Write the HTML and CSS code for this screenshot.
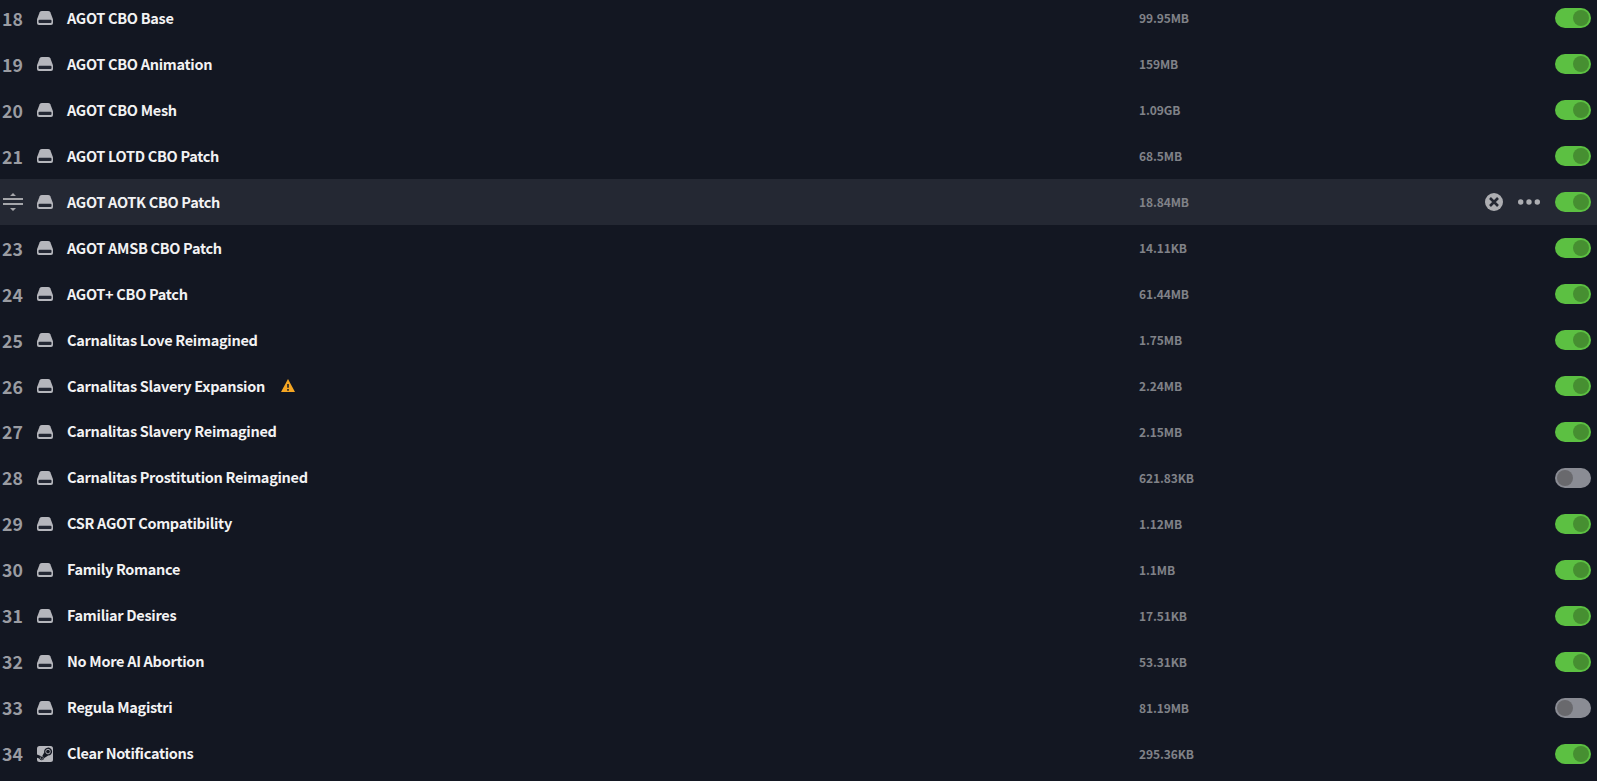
FILE: index.html
```html
<!DOCTYPE html>
<html lang="en">
<head>
  <meta charset="UTF-8" />
  <meta name="viewport" content="width=device-width, initial-scale=1.0" />
  <title>Playset</title>
  <link rel="stylesheet" href="styles.css">
</head>
<body>
  <svg width="0" height="0" class="sprite">
    <symbol id="disk" viewBox="0 0 16 14">
      <path d="M5 0h6q1.700 0 2.300 1.300L16 8.200V12q0 2-2 2H2q-2 0-2-2V8.200L2.700 1.300Q3.300 0 5 0Z" fill="#b5b6bc"/>
      <rect x="1.500" y="8.800" width="13" height="3.200" rx="1" fill="#232733"/>
    </symbol>
    <symbol id="steam" viewBox="0 0 16 16">
      <rect width="16" height="16" rx="2.500" fill="#b5b6bc"/>
      <path d="M0 8.500 5 10.600 7.200 6.400A4 4 0 1 1 11.200 9.600L7.300 12A2.700 2.700 0 0 1 2.200 12.600L0 11.700Z" fill="#131722"/>
      <circle cx="11" cy="5.600" r="2.300" fill="none" stroke="#b5b6bc" stroke-width=".9"/>
      <circle cx="4.800" cy="11.800" r="1.500" fill="none" stroke="#b5b6bc" stroke-width=".5"/>
    </symbol>
    <symbol id="drag" viewBox="0 0 20 18">
      <path d="M0 5h20v2H0zM0 10h20v2H0zM7 3 10 0l3 3zM7 15h6l-3 3z" fill="#a5a6aa"/>
    </symbol>
    <symbol id="remove" viewBox="0 0 18 18">
      <circle cx="9" cy="9" r="9" fill="#adaeb2"/>
      <path d="M5 5l8 8M13 5l-8 8" stroke="#242833" stroke-width="2.600"/>
    </symbol>
    <symbol id="more" viewBox="0 0 22 6">
      <circle cx="2.700" cy="3" r="2.700" fill="#adaeb2"/>
      <circle cx="11" cy="3" r="2.700" fill="#adaeb2"/>
      <circle cx="19.300" cy="3" r="2.700" fill="#adaeb2"/>
    </symbol>
    <symbol id="warning" viewBox="0 0 14 13">
      <path d="M7 0l7 13H0z" fill="#f5a623"/>
      <path d="M6 5h2v3.800H6zM6 10h2v1.700H6z" fill="#4a3a25"/>
    </symbol>
  </svg>

  <div class="mod-list">
    <div class="mod-row">
      <span class="order">18</span>
      <svg class="source"><use href="#disk"/></svg>
      <span class="name">AGOT CBO Base</span>
      <span class="size">99.95MB</span>
      <div class="actions"><span class="toggle on"></span></div>
    </div>
    <div class="mod-row">
      <span class="order">19</span>
      <svg class="source"><use href="#disk"/></svg>
      <span class="name">AGOT CBO Animation</span>
      <span class="size">159MB</span>
      <div class="actions"><span class="toggle on"></span></div>
    </div>
    <div class="mod-row">
      <span class="order">20</span>
      <svg class="source"><use href="#disk"/></svg>
      <span class="name">AGOT CBO Mesh</span>
      <span class="size">1.09GB</span>
      <div class="actions"><span class="toggle on"></span></div>
    </div>
    <div class="mod-row">
      <span class="order">21</span>
      <svg class="source"><use href="#disk"/></svg>
      <span class="name">AGOT LOTD CBO Patch</span>
      <span class="size">68.5MB</span>
      <div class="actions"><span class="toggle on"></span></div>
    </div>
    <div class="mod-row active">
      <svg class="drag"><use href="#drag"/></svg>
      <svg class="source"><use href="#disk"/></svg>
      <span class="name">AGOT AOTK CBO Patch</span>
      <span class="size">18.84MB</span>
      <div class="actions">
        <svg class="remove"><use href="#remove"/></svg>
        <svg class="more"><use href="#more"/></svg>
        <span class="toggle on"></span>
      </div>
    </div>
    <div class="mod-row">
      <span class="order">23</span>
      <svg class="source"><use href="#disk"/></svg>
      <span class="name">AGOT AMSB CBO Patch</span>
      <span class="size">14.11KB</span>
      <div class="actions"><span class="toggle on"></span></div>
    </div>
    <div class="mod-row">
      <span class="order">24</span>
      <svg class="source"><use href="#disk"/></svg>
      <span class="name">AGOT+ CBO Patch</span>
      <span class="size">61.44MB</span>
      <div class="actions"><span class="toggle on"></span></div>
    </div>
    <div class="mod-row">
      <span class="order">25</span>
      <svg class="source"><use href="#disk"/></svg>
      <span class="name">Carnalitas Love Reimagined</span>
      <span class="size">1.75MB</span>
      <div class="actions"><span class="toggle on"></span></div>
    </div>
    <div class="mod-row">
      <span class="order">26</span>
      <svg class="source"><use href="#disk"/></svg>
      <span class="name">Carnalitas Slavery Expansion <svg class="warning"><use href="#warning"/></svg></span>
      <span class="size">2.24MB</span>
      <div class="actions"><span class="toggle on"></span></div>
    </div>
    <div class="mod-row">
      <span class="order">27</span>
      <svg class="source"><use href="#disk"/></svg>
      <span class="name">Carnalitas Slavery Reimagined</span>
      <span class="size">2.15MB</span>
      <div class="actions"><span class="toggle on"></span></div>
    </div>
    <div class="mod-row">
      <span class="order">28</span>
      <svg class="source"><use href="#disk"/></svg>
      <span class="name">Carnalitas Prostitution Reimagined</span>
      <span class="size">621.83KB</span>
      <div class="actions"><span class="toggle"></span></div>
    </div>
    <div class="mod-row">
      <span class="order">29</span>
      <svg class="source"><use href="#disk"/></svg>
      <span class="name">CSR AGOT Compatibility</span>
      <span class="size">1.12MB</span>
      <div class="actions"><span class="toggle on"></span></div>
    </div>
    <div class="mod-row">
      <span class="order">30</span>
      <svg class="source"><use href="#disk"/></svg>
      <span class="name">Family Romance</span>
      <span class="size">1.1MB</span>
      <div class="actions"><span class="toggle on"></span></div>
    </div>
    <div class="mod-row">
      <span class="order">31</span>
      <svg class="source"><use href="#disk"/></svg>
      <span class="name">Familiar Desires</span>
      <span class="size">17.51KB</span>
      <div class="actions"><span class="toggle on"></span></div>
    </div>
    <div class="mod-row">
      <span class="order">32</span>
      <svg class="source"><use href="#disk"/></svg>
      <span class="name">No More AI Abortion</span>
      <span class="size">53.31KB</span>
      <div class="actions"><span class="toggle on"></span></div>
    </div>
    <div class="mod-row">
      <span class="order">33</span>
      <svg class="source"><use href="#disk"/></svg>
      <span class="name">Regula Magistri</span>
      <span class="size">81.19MB</span>
      <div class="actions"><span class="toggle"></span></div>
    </div>
    <div class="mod-row">
      <span class="order">34</span>
      <svg class="source steam"><use href="#steam"/></svg>
      <span class="name">Clear Notifications</span>
      <span class="size">295.36KB</span>
      <div class="actions"><span class="toggle on"></span></div>
    </div>
  </div>
</body>
</html>
```
FILE: styles.css
```css
:root {
  --bg: #131722;
  --row-active: #242833;
  --green: #5cc042;
  --green-dark: #468f31;
}

* {
  box-sizing: border-box;
  margin: 0;
  padding: 0;
}

body {
  background-color: var(--bg);
  font-family: 'Noto Sans CJK SC', 'Noto Sans', sans-serif;
  font-weight: 700;
  height: 100vh;
  overflow: hidden;
}

.sprite {
  display: block;
}

.mod-list {
  margin-top: -5px;
}

.mod-row {
  display: grid;
  grid-template-columns: 37px 30px 1072px 1fr auto;
  align-items: center;
  height: 45.985px;
  padding-right: 6px;
}

.mod-row.active {
  background-color: var(--row-active);
}

.order {
  margin-bottom: 0.719px;
  padding-left: 2px;
  font-size: 17.7px;
  line-height: 24px;
  color: #9a9ca2;
}

.drag {
  width: 20px;
  height: 18px;
  margin-left: 3px;
}

.source {
  width: 16px;
  height: 14px;
}

.source.steam {
  height: 16px;
}

.name {
  display: flex;
  align-items: center;
  gap: 16px;
  margin-bottom: 0.719px;
  font-size: 14.5px;
  line-height: 20px;
  letter-spacing: -0.3px;
  color: #f2f2f3;
}

.warning {
  width: 14px;
  height: 13px;
}

.size {
  font-size: 12px;
  line-height: 18px;
  letter-spacing: -0.1px;
  color: #808288;
}

.actions {
  display: flex;
  align-items: center;
  gap: 15px;
}

.remove {
  width: 18px;
  height: 18px;
}

.more {
  width: 22px;
  height: 6px;
}

.toggle {
  width: 36px;
  height: 20px;
  padding: 2px;
  border-radius: 10px;
  background-color: #8a8c94;
}

.toggle::before {
  content: "";
  display: block;
  width: 16px;
  height: 16px;
  border-radius: 50%;
  background-color: #69696d;
}

.toggle.on {
  background-color: var(--green);
}

.toggle.on::before {
  margin-left: auto;
  background-color: var(--green-dark);
}
```
